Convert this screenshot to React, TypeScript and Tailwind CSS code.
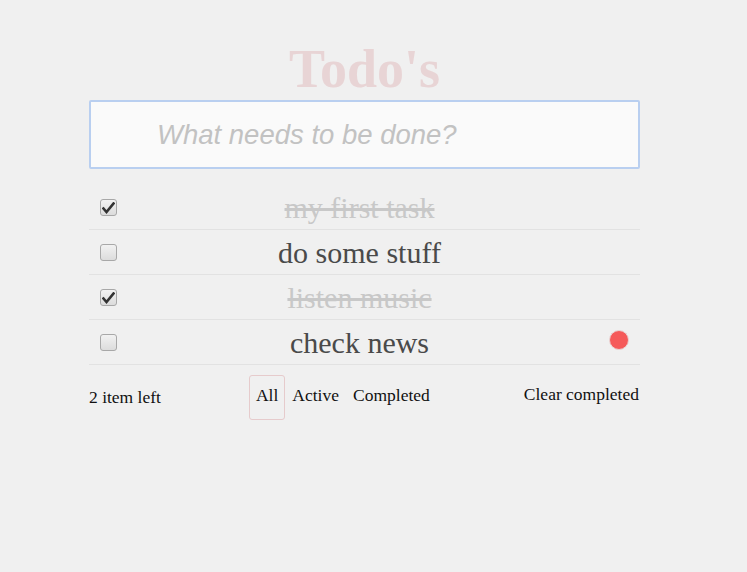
import React from "react";

const serif = { fontFamily: '"Liberation Serif", "Times New Roman", serif' };

function Check({ checked }: { checked: boolean }) {
  return (
    <div className="w-[17px] h-[17px] rounded-[3px] border border-[#a8a8a8] bg-gradient-to-b from-[#f2f2f2] to-[#dcdcdc] flex items-center justify-center shrink-0">
      {checked && (
        <svg width="13" height="12" viewBox="0 0 13 12">
          <path d="M1.5 6.5 L4.5 10 L11.5 1.5" fill="none" stroke="#333" strokeWidth="2.6" strokeLinecap="square" strokeLinejoin="miter" />
        </svg>
      )}
    </div>
  );
}

const todos = [
  { text: "my first task", done: true },
  { text: "do some stuff", done: false },
  { text: "listen music", done: true },
  { text: "check news", done: false, hover: true },
];

export default function App() {
  return (
    <div className="min-h-screen w-full bg-[#f0f0f0]" style={serif}>
      <div className="ml-[89px] w-[551px] pt-[42px]">
        <h1 className="text-center text-[54px] leading-none h-[53px] font-bold text-[#e8d4d5] mb-[5px]">Todo's</h1>
        <div className="h-[69px] border-2 border-[#b9cff0] rounded-[2px] bg-[#fafafa] flex items-center pl-[66px]">
          <span
            className="italic text-[27.5px] text-[#c2c2c2]"
            style={{ fontFamily: '"Liberation Sans", Arial, sans-serif' }}
          >
            What needs to be done?
          </span>
        </div>
        <ul className="mt-[16px]">
          {todos.map((t, i) => (
            <li key={i} className="relative h-[45px] border-b border-[#e2e2e2] flex items-center">
              <div className="absolute left-[11px] top-[14px]">
                <Check checked={t.done} />
              </div>
              <div
                className={
                  "w-full text-center pr-[10px] text-[30px] " +
                  (t.done ? "line-through text-[#c8c8c8]" : "text-[#4a4a4a]")
                }
              >
                {t.text}
              </div>
              {t.hover && (
                <div className="absolute right-[11px] top-[10px] w-[20px] h-[20px] rounded-full bg-[#f55a5a] border border-[#ead3d3]" />
              )}
            </li>
          ))}
        </ul>
        <div className="flex justify-between items-start pt-[10px] text-[17.5px] leading-[20px] text-[#111]">
          <span className="mt-[12px]">2 item left</span>
          <div className="flex ml-[1px]">
            <span className="h-[45px] pt-[9px] px-[6px] border border-[#e6cbcc] rounded-[3px]">All</span>
            <span className="h-[45px] pt-[9px] px-[6px] border border-transparent">Active</span>
            <span className="h-[45px] pt-[9px] px-[6px] border border-transparent">Completed</span>
          </div>
          <span className="mt-[9px] mr-[1px]">Clear completed</span>
        </div>
      </div>
    </div>
  );
}
